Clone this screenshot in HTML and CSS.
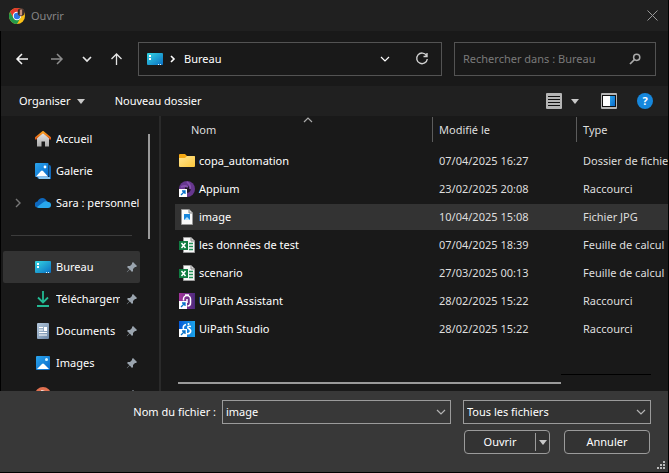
FILE: index.html
```html
<!DOCTYPE html>
<html lang="fr">
<head>
<meta charset="utf-8">
<title>Ouvrir</title>
<link rel="stylesheet" href="styles.css">
</head>
<body>
<svg class="defs" aria-hidden="true">
  <defs>
    <linearGradient id="g-teal" x1="0" y1="0" x2="1" y2="1"><stop offset="0" stop-color="#35d6e2"/><stop offset="1" stop-color="#0a6fc4"/></linearGradient>
    <linearGradient id="g-blue" x1="0" y1="0" x2="1" y2="1"><stop offset="0" stop-color="#2aa5ee"/><stop offset="1" stop-color="#0868c8"/></linearGradient>
    <linearGradient id="g-folder" x1="0" y1="0" x2="1" y2="1"><stop offset="0" stop-color="#ffe694"/><stop offset="1" stop-color="#fcc63a"/></linearGradient>
    <linearGradient id="g-roof" x1="0" y1="0" x2="0" y2="1"><stop offset="0" stop-color="#fba01e"/><stop offset="1" stop-color="#dc5214"/></linearGradient>
    <linearGradient id="g-wall" x1="0" y1="0" x2="0" y2="1"><stop offset="0" stop-color="#e6e6e6"/><stop offset="1" stop-color="#aaaaaa"/></linearGradient>
    <linearGradient id="g-doc" x1="0" y1="0" x2="1" y2="1"><stop offset="0" stop-color="#b4c8dc"/><stop offset="1" stop-color="#6d87a6"/></linearGradient>
    <linearGradient id="g-assist" x1="0" y1="0" x2="1" y2="0"><stop offset="0" stop-color="#a3349b"/><stop offset="1" stop-color="#4b2a7c"/></linearGradient>
    <linearGradient id="g-studio" x1="0" y1="0" x2="1" y2="0"><stop offset="0" stop-color="#0759d6"/><stop offset="1" stop-color="#1ba4ea"/></linearGradient>
    <symbol id="desktop" viewBox="0 0 16 16"><rect y="2" width="16" height="12" rx="1" fill="url(#g-teal)"/><path d="M2 4h2v2H2zM2 7h2v2H2z" fill="#fff"/><path d="M11 13h1v1h-1zM13 13h1v1h-1z" fill="#d8f4ff"/></symbol>
    <symbol id="pin" viewBox="0 0 12 12"><path d="M7 1l4 4-1 1-1 0-2 2v2L6 11 3.800 8.600 1 11.200.8 11 3.400 8.200 1 6l1-1h2l2-2V2z" fill="#9aa4ae"/></symbol>
    <symbol id="shortcut" viewBox="0 0 16 16"><rect y="8" width="8" height="8" fill="#fff"/><path d="M2 14l3.500-3.500M3 10h3v3" fill="none" stroke="#0872c9" stroke-width="1.300"/></symbol>
    <symbol id="excel" viewBox="0 0 16 16"><path d="M4.500 .5h7.500L15.500 4v11.500h-11z" fill="#f7f7f7" stroke="#9c9c9c"/><path d="M12 .5V4h3.500" fill="#ddd" stroke="#888"/><path d="M10 6.500h4M10 9.500h4M10 12.500h4" stroke="#23915a" stroke-width="1.300"/><rect y="4" width="9" height="9" fill="#107c41"/><path d="M2.500 6l4 5M6.500 6l-4 5" stroke="#fff" stroke-width="1.500"/></symbol>
    <symbol id="chevron" viewBox="0 0 10 10"><path d="M1 3l4 4 4-4" fill="none" stroke="currentColor" stroke-width="1.200"/></symbol>
    <symbol id="picture" viewBox="0 0 16 16"><rect x="1" y="1" width="14" height="14" rx="1" fill="url(#g-blue)"/><path d="M2 14l5-5q1-1 2 0l5 5z" fill="#fff"/><circle cx="11.500" cy="4.500" r="1.500" fill="#d5f4ff"/></symbol>
  </defs>
</svg>
<div class="window">
  <header class="titlebar">
    <svg class="chrome" viewBox="0 0 16 16" aria-hidden="true"><circle cx="8" cy="8" r="8" fill="#fbc116"/><path d="M1.070 4A8 8 0 0 1 14.930 4H8L4.540 10z" fill="#e33b2e"/><path d="M1.070 4A8 8 0 0 0 8 16l3.460-6H4.540z" fill="#229a4b"/><circle cx="8" cy="8" r="4.200" fill="#fff"/><circle cx="8" cy="8" r="3.200" fill="#2f78e4"/><ellipse cx="12" cy="4.300" rx="3.400" ry="4" fill="#5d4038"/><path d="M10.500 2.500q2-2 3 0v4q-2 2-3 0z" fill="#c99278"/><path d="M10 1.500v5M14 2v5" stroke="#26201f" stroke-width="1.200"/></svg>
    <h1>Ouvrir</h1>
    <button class="close" aria-label="Fermer"><svg viewBox="0 0 11 11"><path d="M.5.5l10 10M10.500.5l-10 10" stroke="#999" fill="none"/></svg></button>
  </header>

  <nav class="navbar" aria-label="Navigation">
    <div class="history">
      <button class="back" aria-label="Précédent"><svg viewBox="0 0 14 14"><path d="M13 7H2M7 2L2 7l5 5" fill="none" stroke="#f5f5f5" stroke-width="1.500"/></svg></button>
      <button aria-label="Suivant"><svg viewBox="0 0 14 14"><path d="M1 7h11M7 2l5 5-5 5" fill="none" stroke="#8d8d8d" stroke-width="1.500"/></svg></button>
      <button class="recent" aria-label="Emplacements récents"><svg viewBox="0 0 10 10"><path d="M1 3l4 4 4-4" fill="none" stroke="#e5e5e5" stroke-width="1.700"/></svg></button>
      <button aria-label="Dossier parent"><svg viewBox="0 0 14 14"><path d="M6.500 13V2M1.500 7l5-5 5 5" fill="none" stroke="#e5e5e5" stroke-width="1.300"/></svg></button>
    </div>
    <div class="address">
      <svg class="icon" aria-hidden="true"><use href="#desktop"/></svg>
      <svg class="crumb" viewBox="0 0 6 8" aria-hidden="true"><path d="M1 1l3 3-3 3" fill="none" stroke="#fff" stroke-width="1.600"/></svg>
      <a href="#">Bureau</a>
      <button class="more" aria-label="Historique"><svg class="chev"><use href="#chevron"/></svg></button>
      <button aria-label="Actualiser"><svg class="reload" viewBox="0 0 14 14"><path d="M11.500 3.500A5.300 5.300 0 1 0 12.300 7M12 1v3.500H8.500" fill="none" stroke="#d0d0d0" stroke-width="1.400"/></svg></button>
    </div>
    <div class="search">
      <input type="search" aria-label="Rechercher" placeholder="Rechercher dans : Bureau">
      <svg viewBox="0 0 12 12" aria-hidden="true"><circle cx="7.700" cy="4.300" r="3.100" fill="none" stroke="#aaa" stroke-width="1.500"/><path d="M5.500 6.500L1 11" stroke="#aaa" stroke-width="1.700"/></svg>
    </div>
  </nav>

  <div class="toolbar">
    <button class="organize">Organiser <i class="caret"></i></button>
    <button>Nouveau dossier</button>
    <div class="views">
      <button aria-label="Affichage"><svg class="icon" viewBox="0 0 16 16"><rect width="16" height="16" rx="1" fill="#b5b5b5"/><path d="M2 3.500h12M2 6.500h12M2 9.500h12M2 12.500h12" stroke="#111"/></svg></button>
      <button class="view-menu" aria-label="Choisir l’affichage"><i class="caret"></i></button>
      <button aria-label="Volet de visualisation"><svg class="icon" viewBox="0 0 16 16"><rect width="16" height="16" rx="1" fill="#b5b5b5"/><rect x="1" y="2" width="14" height="12" fill="#111"/><path d="M2 3h7v10H2z" fill="#fff"/><path d="M9 3h5v10H9z" fill="url(#g-blue)"/></svg></button>
      <button class="help" aria-label="Aide">?</button>
    </div>
  </div>

  <main class="content">
    <aside class="sidebar">
      <ul class="places">
        <li><svg class="icon" viewBox="0 0 16 16"><path d="M2 7l6-5.500L14 7v8.500H10v-5H6.500v5H2z" fill="url(#g-wall)"/><path d="M.8 8.500V7L8 1l7.200 6v1.500" fill="none" stroke="url(#g-roof)" stroke-width="2"/></svg><a href="#">Accueil</a></li>
        <li><svg class="icon" viewBox="0 0 16 16"><path d="M14 2q2 0 2 2v12H4q-1.500 0-2-2h12z" fill="#1268b8"/><path d="M3 14h12v2H4z" fill="#8bc6f0"/><rect width="13.500" height="14" rx="1" fill="url(#g-blue)"/><path d="M1 13.500L6 8q1-1 2 0l5 5.500z" fill="#fff"/><circle cx="10" cy="4" r="1.400" fill="#fff"/></svg><a href="#">Galerie</a></li>
        <li><svg class="expand" viewBox="0 0 6 10"><path d="M1 1l4 4-4 4" fill="none" stroke="#777" stroke-width="1.400"/></svg><svg class="icon" viewBox="0 0 16 16"><path d="M3 12.500a3 3 0 0 1-.5-6Q4 3 7.500 3q3 0 4.500 3.500a3.200 3.200 0 0 1 1 6z" fill="#0e68bd"/><path d="M2 12L8 7.500q3-2 5-.5a3 3 0 0 1 0 6H4q-1.500 0-2-1z" fill="#29a8ee"/></svg><a href="#">Sara : personnel</a></li>
      </ul>
      <hr>
      <ul class="places">
        <li class="current"><svg class="icon"><use href="#desktop"/></svg><a href="#">Bureau</a><svg class="pin"><use href="#pin"/></svg></li>
        <li><svg class="icon" viewBox="0 0 16 16"><path d="M8 0v11M3 6.500L8 11.500l5-5M2 15h12" fill="none" stroke="#23b993" stroke-width="1.800"/></svg><a href="#">Téléchargements</a><svg class="pin"><use href="#pin"/></svg></li>
        <li><svg class="icon" viewBox="0 0 16 16"><rect x="2" width="12" height="16" rx="1" fill="url(#g-doc)"/><path d="M4 4.500h4M4 7h4M4 9.500h8M4 12h8" stroke="#fff" stroke-width="1.200"/><path d="M9 4h3v4H9z" fill="#fff"/></svg><a href="#">Documents</a><svg class="pin"><use href="#pin"/></svg></li>
        <li><svg class="icon"><use href="#picture"/></svg><a href="#">Images</a><svg class="pin"><use href="#pin"/></svg></li>
        <li><svg class="icon" viewBox="0 0 16 16"><circle cx="8" cy="8" r="8" fill="#e07050"/><path d="M7 11V4l4 1" fill="none" stroke="#fff" stroke-width="1.500"/></svg><a href="#">Musique</a><svg class="pin"><use href="#pin"/></svg></li>
      </ul>
      <div class="vscroll"></div>
    </aside>

    <section class="files">
      <div class="listing">
        <table>
          <colgroup><col class="c-name"><col class="c-date"><col></colgroup>
          <thead>
            <tr>
              <th><span>Nom</span><svg class="sort" viewBox="0 0 10 6"><path d="M1 5l4-4 4 4" fill="none" stroke="#aaa" stroke-width="1.200"/></svg></th>
              <th><span>Modifié le</span></th>
              <th><span>Type</span></th>
            </tr>
          </thead>
          <tbody>
            <tr><td><div class="name"><svg class="icon" viewBox="0 0 16 16"><path d="M0 2q0-1 1-1h5l2 2h7q1 0 1 1v9H0z" fill="#f5a914"/><path d="M0 5h6l2-2h7q1 0 1 1v9q0 1-1 1H1q-1 0-1-1z" fill="url(#g-folder)"/></svg>copa_automation</div></td><td>07/04/2025 16:27</td><td>Dossier de fichiers</td></tr>
            <tr><td><div class="name"><svg class="icon" viewBox="0 0 16 16"><circle cx="8" cy="8" r="8" fill="#67378f"/><path d="M6.500 5q3-1 5 1 1 3-1 5l-2 1Q5 9 6.500 5z" fill="#211827"/><path d="M8 1q4 3 3 7M2 6q4-2 7 0" fill="none" stroke="#8552ad" stroke-width="1.800"/><use href="#shortcut"/></svg>Appium</div></td><td>23/02/2025 20:08</td><td>Raccourci</td></tr>
            <tr class="selected"><td><div class="name"><svg class="icon" viewBox="0 0 16 16"><path d="M2.500.5H10L13.500 4v11.500h-11z" fill="#fafafa" stroke="#999"/><path d="M10 .5V4h3.500" fill="#ddd" stroke="#888"/><rect x="5" y="5" width="6" height="6" fill="#1686dc"/><path d="M5 11l3-3 3 3z" fill="#b8e4ff"/></svg>image</div></td><td>10/04/2025 15:08</td><td>Fichier JPG</td></tr>
            <tr><td><div class="name"><svg class="icon"><use href="#excel"/></svg>les données de test</div></td><td>07/04/2025 18:39</td><td>Feuille de calcul</td></tr>
            <tr><td><div class="name"><svg class="icon"><use href="#excel"/></svg>scenario</div></td><td>27/03/2025 00:13</td><td>Feuille de calcul</td></tr>
            <tr><td><div class="name"><svg class="icon" viewBox="0 0 16 16"><rect width="16" height="16" fill="url(#g-assist)"/><path d="M4.500 7.500V6a3.500 3.500 0 0 1 7 0v4a3 3 0 0 1-3 3M8 6v4M6 2l4 0" fill="none" stroke="#fff" stroke-width="1.500"/><use href="#shortcut"/></svg>UiPath Assistant</div></td><td>28/02/2025 15:22</td><td>Raccourci</td></tr>
            <tr><td><div class="name"><svg class="icon" viewBox="0 0 16 16"><rect width="16" height="16" fill="url(#g-studio)"/><path d="M7 3.500Q3.500 4.500 4.500 8M12 5.500q-4-1-3 1.500 3.500 2 2.500 4-1.500 2.500-4 1.500" fill="none" stroke="#fff" stroke-width="1.600"/><circle cx="9.500" cy="3" r="1" fill="#fff"/><use href="#shortcut"/></svg>UiPath Studio</div></td><td>28/02/2025 15:22</td><td>Raccourci</td></tr>
          </tbody>
        </table>
      </div>
      <div class="hscroll"><div class="thumb"></div><div class="track"></div></div>
    </section>
  </main>

  <form class="footer">
    <label class="name-label" for="filename">Nom du fichier :</label>
    <div class="field filename">
      <input id="filename" type="text" value="image">
      <svg class="chev" aria-hidden="true"><use href="#chevron"/></svg>
    </div>
    <div class="field filetype">
      <select aria-label="Type de fichier"><option>Tous les fichiers</option></select>
      <svg class="chev" aria-hidden="true"><use href="#chevron"/></svg>
    </div>
    <div class="actions">
      <div class="split"><button type="button">Ouvrir</button><button type="button" class="drop" aria-label="Options d’ouverture"><i class="caret"></i></button></div>
      <button type="button" class="cancel">Annuler</button>
    </div>
    <svg class="grip" viewBox="0 0 8 8" aria-hidden="true"><path d="M6 0h2v2H6zM3 3h2v2H3zM6 3h2v2H6zM0 6h2v2H0zM3 6h2v2H3zM6 6h2v2H6z" fill="#bbb"/></svg>
  </form>
</div>
</body>
</html>
```

FILE: styles.css
```css
* { box-sizing: border-box; }
body {
  margin: 0;
  background: #000;
  color: #fff;
  font: 11px/16px "Noto Sans", "Open Sans", sans-serif;
}
button, input, select { font: inherit; color: inherit; background: none; border: 0; padding: 0; margin: 0; outline: 0; }
button { display: flex; align-items: center; justify-content: center; }
a { color: inherit; text-decoration: none; }
svg { display: block; flex: none; }
.defs { position: absolute; width: 0; height: 0; }
.icon { width: 16px; height: 16px; }
.chev { width: 10px; height: 10px; }
.caret { border: 4px solid transparent; border-top: 5px solid #c8c8c8; border-bottom: 0; }

.window { display: flex; flex-direction: column; height: 100vh; padding: 0 1px 1px 0; }

.titlebar { display: flex; align-items: center; flex: none; height: 31px; padding: 0 10px 0 9px; gap: 6px; background: #202020; }
.chrome { width: 16px; height: 16px; }
.titlebar h1 { margin: 0; font-size: 11px; font-weight: 400; color: #858585; }
.close { margin-left: auto; }
.close svg { width: 11px; height: 11px; }

.navbar { display: flex; align-items: center; flex: none; height: 55px; padding: 0 12px 0 14px; gap: 12px; background: #191919; border-left: 1px solid #000; }
.history { display: flex; align-items: center; gap: 18px; width: 111px; }
.history svg { width: 14px; height: 14px; }
.history .back { margin-right: 3px; }
.history .recent svg { width: 10px; height: 10px; }
.address { display: flex; align-items: center; flex: 1; min-width: 0; height: 34px; padding: 0 12px 0 8px; border: 1px solid #535353; }
.crumb { width: 6px; height: 8px; margin: 0 8px 0 7px; }
.address .more { margin: 0 25px 0 auto; }
.reload { width: 14px; height: 14px; }
.search { display: flex; align-items: center; width: 202px; height: 34px; padding: 0 14px 0 8px; border: 1px solid #535353; }
.search input { flex: 1; min-width: 0; }
.search input::placeholder { color: #7a7a7a; opacity: 1; }
.search svg { width: 12px; height: 12px; }

.toolbar { display: flex; align-items: center; flex: none; height: 30px; padding: 0 15px 0 18px; gap: 30px; background: #202020; border-left: 1px solid #000; }
.organize { gap: 6px; }
.views { display: flex; align-items: center; margin-left: auto; }
.view-menu { margin: 0 22px 0 9px; }
.help { width: 16px; height: 16px; margin-left: 20px; border-radius: 50%; background: #1687dc; font-weight: 700; }

.content { display: flex; flex: 1; min-height: 0; background: #191919; border-left: 1px solid #000; }
.sidebar { position: relative; flex: none; width: 160px; padding: 7px 19px 0 2px; overflow: hidden; border-right: 2px solid #2a2a2a; }
.places { margin: 0; padding: 0; list-style: none; }
.places li { display: flex; align-items: center; height: 32px; padding-left: 32px; position: relative; }
.places a { flex: 1; min-width: 0; margin-left: 5px; overflow: hidden; white-space: nowrap; }
.places .current { background: #333; border-radius: 2px; }
.expand { position: absolute; left: 12px; width: 6px; height: 10px; }
.pin { width: 12px; height: 12px; margin: 0 2px 0 6px; }
.sidebar hr { height: 1px; margin: 16px 8px 15px; border: 0; background: #3c3c3c; }
.vscroll { position: absolute; top: 18px; right: 9px; width: 2px; height: 105px; background: #9a9a9a; }

.files { display: flex; flex-direction: column; flex: 1; min-width: 0; padding-left: 14px; }
.listing { flex: 1; min-height: 0; overflow: hidden; }
table { width: 100%; table-layout: fixed; border-collapse: collapse; white-space: nowrap; }
.c-name { width: 257px; }
.c-date { width: 144px; }
th { position: relative; height: 30px; padding: 1px 0 4px; font-weight: 400; text-align: left; color: #dedede; }
th span { display: block; height: 25px; padding-left: 6px; line-height: 25px; border-left: 1px solid #5c5c5c; }
th:first-child span { padding-left: 15px; border-color: transparent; }
.sort { position: absolute; top: 1px; left: 128px; width: 10px; height: 6px; }
td { height: 28px; padding: 0 0 0 7px; overflow: hidden; color: #dedede; border: solid transparent; border-width: 2px 0; background-clip: padding-box; }
td:first-child { padding-left: 4px; color: #fff; }
.selected td { background-color: #333; }
.name { display: flex; align-items: center; gap: 4px; }
.hscroll { display: flex; flex: none; height: 17px; padding: 0 17px 7px 3px; }
.thumb { flex: 1; height: 2px; margin-top: 8px; background: #9a9a9a; }
.track { width: 90px; height: 1px; background: #000; }

.footer { position: relative; display: grid; grid-template-columns: 216px 1fr 188px; align-content: start; column-gap: 6px; row-gap: 6px; flex: none; height: 81px; padding: 9px 17px 0 0; background: #383838; }
.name-label { text-align: right; line-height: 24px; }
.field { position: relative; display: flex; align-items: center; height: 24px; border: 1px solid #9b9b9b; }
.filename { margin-right: 6px; }
.field input { flex: 1; min-width: 0; padding-left: 3px; }
.field select { flex: 1; padding: 0 20px 0 3px; appearance: none; }
.field .chev { position: absolute; right: 4px; color: #b4b4b4; pointer-events: none; }
.filetype { background: #333; }
.actions { grid-column: 3; display: flex; justify-content: space-between; height: 24px; padding: 0 1px; }
.split, .cancel { width: 86px; height: 24px; border: 1px solid #9b9b9b; border-radius: 4px; background: #333; }
.split { display: flex; }
.split button:first-child { flex: 1; }
.split .drop { width: 14px; margin: 2px 0; border-left: 1px solid #9b9b9b; }
.grip { position: absolute; right: 3px; bottom: 3px; width: 8px; height: 8px; }
```
